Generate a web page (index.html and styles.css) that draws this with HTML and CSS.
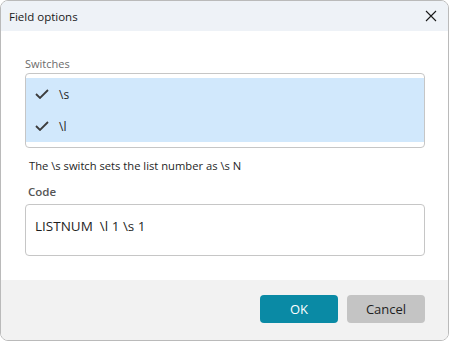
FILE: index.html
```html
<!DOCTYPE html>
<html lang="en">
<head>
    <meta charset="UTF-8">
    <meta name="viewport" content="width=device-width, initial-scale=1.0">
    <title>Field options</title>
    <link rel="stylesheet" href="styles.css">
</head>
<body>

<div class="dialog">
    <header class="titlebar">
        <span class="title">Field options</span>
        <button class="close" aria-label="Close">
            <svg width="12" height="12" viewBox="0 0 12 12">
                <path d="M1 1 L11 11 M11 1 L1 11" stroke="#1a1a1a" stroke-width="1.1" fill="none"/>
            </svg>
        </button>
    </header>

    <main class="content">
        <div class="field-label">Switches</div>
        <ul class="switch-list">
            <li class="switch selected">
                <svg class="check" width="14" height="10" viewBox="0 0 14 10">
                    <path d="M1 5 L5 9 L13 1" stroke="#3c3c3c" stroke-width="1.8" fill="none"/>
                </svg>
                <span>\s</span>
            </li>
            <li class="switch selected">
                <svg class="check" width="14" height="10" viewBox="0 0 14 10">
                    <path d="M1 5 L5 9 L13 1" stroke="#3c3c3c" stroke-width="1.8" fill="none"/>
                </svg>
                <span>\l</span>
            </li>
        </ul>

        <p class="hint">The \s switch sets the list number as \s N</p>

        <div class="field-label strong">Code</div>
        <div class="code-box">LISTNUM&nbsp; \l 1 \s 1</div>
    </main>

    <footer class="buttons">
        <button class="btn primary">OK</button>
        <button class="btn">Cancel</button>
    </footer>
</div>

</body>
</html>
```

FILE: styles.css
```css
/* Reset */
* {
    margin: 0;
    padding: 0;
    box-sizing: border-box;
}

body {
    font-family: "Open Sans", "Noto Sans", sans-serif;
    background: #fff;
    color: #1f1f1f;
}

/* Dialog window */
.dialog {
    width: 449px;
    height: 341px;
    border: 1px solid #bababa;
    border-radius: 8px;
    overflow: hidden;
    display: flex;
    flex-direction: column;
    background: #fff;
}

.titlebar {
    height: 30px;
    flex: none;
    background: #eef2f7;
    display: flex;
    align-items: center;
    justify-content: space-between;
    padding: 0 0 0 8px;
}

.title {
    font-size: 11.5px;
    color: #1a1a1a;
}

.close {
    width: 32px;
    height: 30px;
    border: none;
    background: none;
    display: flex;
    align-items: center;
    justify-content: center;
    margin-right: 1px;
}

/* Content */
.content {
    flex: 1;
    padding: 25px 23px 0 24px;
}

.field-label {
    font-size: 11px;
    color: #6b6b6b;
    line-height: 16px;
    margin-bottom: 1px;
}

.field-label.strong {
    font-size: 11.5px;
    color: #555;
    font-weight: 600;
    margin: 0 0 4px 3px;
}

.switch-list {
    list-style: none;
    border: 1px solid #c6c6c6;
    border-radius: 4px;
    padding: 4px 0 5px;
    height: 75px;
}

.switch {
    height: 32px;
    display: flex;
    align-items: center;
    gap: 10px;
    padding-left: 9px;
    font-size: 12px;
}

.switch.selected {
    background: #d1e8fc;
}

.hint {
    font-size: 11.2px;
    margin: 10px 0 10px 4px;
    line-height: 16px;
}

.code-box {
    border: 1px solid #c6c6c6;
    border-radius: 4px;
    height: 52px;
    padding: 12px 0 0 9px;
    font-size: 13.5px;
    line-height: 18px;
}

/* Footer buttons */
.buttons {
    height: 60px;
    flex: none;
    background: #f2f2f2;
    display: flex;
    justify-content: flex-end;
    align-items: flex-start;
    gap: 9px;
    padding: 15px 23px 0 0;
}

.btn {
    width: 78px;
    height: 28px;
    border: none;
    border-radius: 4px;
    background: #c4c4c4;
    color: #1f1f1f;
    font-family: inherit;
    font-size: 13px;
}

.btn.primary {
    background: #0a8aa5;
    color: #fff;
}
```
